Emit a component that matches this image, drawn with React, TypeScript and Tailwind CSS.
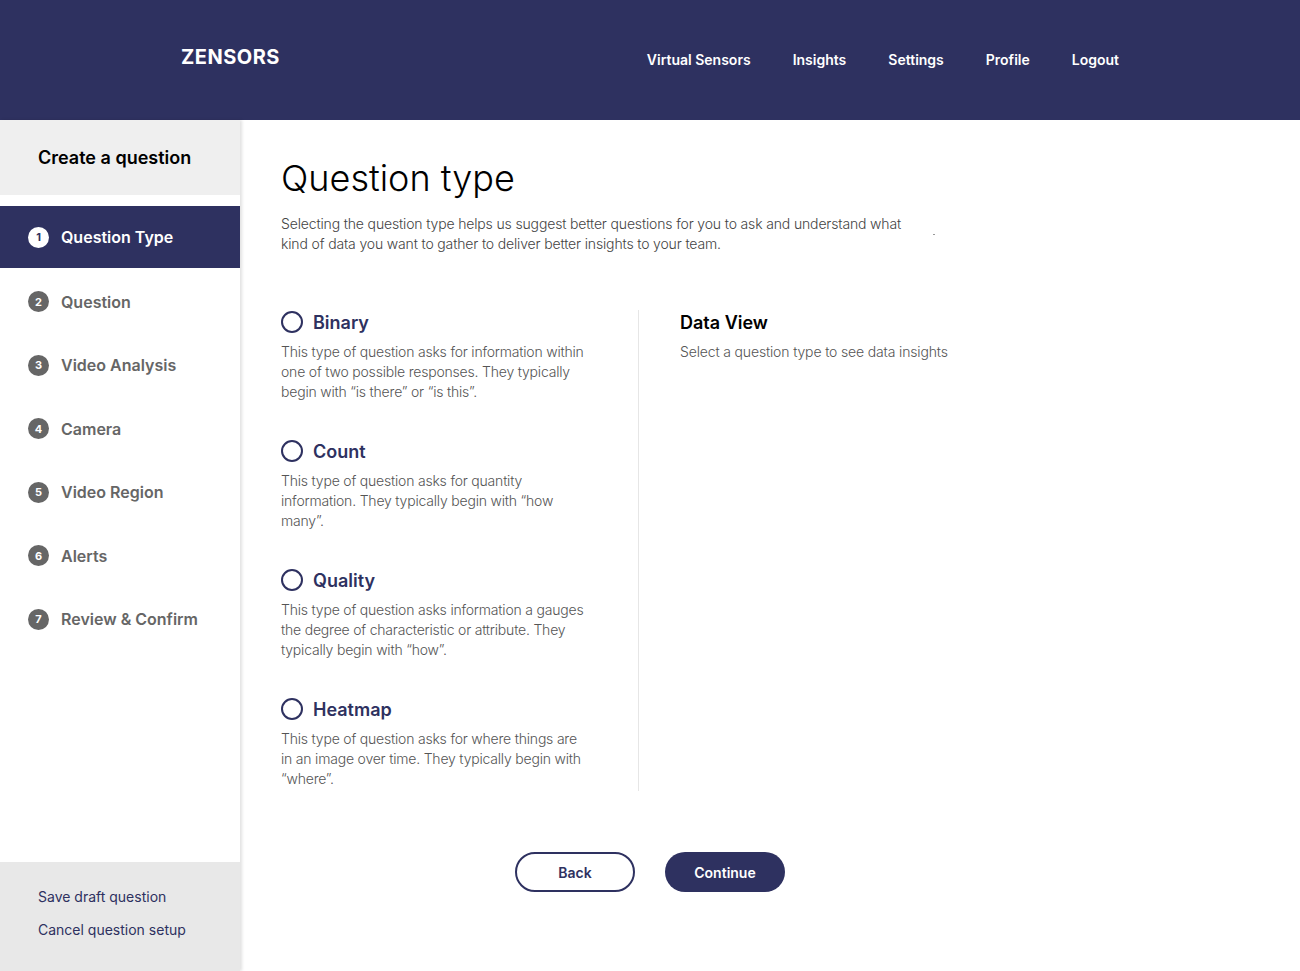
import React from "react";

const NAVY = "#2e3160";

const steps = [
  "Question",
  "Video Analysis",
  "Camera",
  "Video Region",
  "Alerts",
  "Review & Confirm",
];

const options = [
  {
    title: "Binary",
    desc: ["This type of question asks for information within", "one of two possible responses. They typically", "begin with “is there” or “is this”."],
  },
  {
    title: "Count",
    desc: ["This type of question asks for quantity", "information. They typically begin with “how", "many”."],
  },
  {
    title: "Quality",
    desc: ["This type of question asks information a gauges", "the degree of characteristic or attribute. They", "typically begin with “how”."],
  },
  {
    title: "Heatmap",
    desc: ["This type of question asks for where things are", "in an image over time. They typically begin with", "“where”."],
  },
];

export default function App() {
  return (
    <div
      className="w-[1300px] min-h-[971px] bg-white flex flex-col"
      style={{ fontFamily: "Inter, 'Noto Sans', 'Liberation Sans', sans-serif" }}
    >
      {/* Header */}
      <header className="h-[120px] bg-[#2e3160] flex items-center pl-[181px] pr-[181px]">
        <div className="text-white text-[20px] font-bold tracking-[0.5px] -mt-[6px]">ZENSORS</div>
        <nav className="ml-auto flex items-center gap-[42px] text-white text-[14px] font-semibold -mt-[2px]">
          <span>Virtual Sensors</span>
          <span>Insights</span>
          <span>Settings</span>
          <span>Profile</span>
          <span>Logout</span>
        </nav>
      </header>

      <div className="flex flex-1">
        {/* Sidebar */}
        <aside className="w-[240px] min-h-[851px] flex flex-col bg-white shadow-[2px_0_3px_rgba(0,0,0,0.12)] relative z-10">
          <div className="h-[75px] bg-[#efefef] flex items-center pl-[38px] text-[18px] font-semibold text-black">
            Create a question
          </div>
          <div className="mt-[11px] h-[62px] bg-[#2e3160] flex items-center pl-[28px] gap-[12px]">
            <span className="w-[21px] h-[21px] rounded-full bg-white text-[#2e3160] text-[11px] font-bold flex items-center justify-center">
              1
            </span>
            <span className="text-white text-[16px] font-semibold">Question Type</span>
          </div>
          <div className="mt-[2px]" />
          {steps.map((s, i) => (
            <div key={s} className="h-[63.5px] flex items-center pl-[28px] gap-[12px]">
              <span className="w-[21px] h-[21px] rounded-full bg-[#666666] text-white text-[11px] font-bold flex items-center justify-center">
                {i + 2}
              </span>
              <span className="text-[#666666] text-[16px] font-semibold">{s}</span>
            </div>
          ))}
          <div className="flex-1" />
          <div className="h-[109px] bg-[#e8e8e8] pl-[38px] pt-[25px] flex flex-col gap-[13px] text-[14px] text-[#2e3160]">
            <span className="leading-[20px]">Save draft question</span>
            <span className="leading-[20px]">Cancel question setup</span>
          </div>
        </aside>

        {/* Main */}
        <main className="flex-1 pl-[41px] pt-[36px] relative">
          <h1 className="text-[36px] font-light text-black leading-[44px]">Question type</h1>
          <p className="mt-[14px] text-[14px] font-light text-[#444444] leading-[20px] w-[640px] tracking-[-0.15px]">
            Selecting the question type helps us suggest better questions for you to ask and understand what kind of data you want to gather to deliver better insights to your team.
          </p>
          <span className="absolute left-[693px] top-[114px] w-[2px] h-[1px] bg-[#999999]" />

          <div className="mt-[56px] flex">
            <div className="w-[358px] border-r border-[#e6e6e6] flex flex-col gap-[37px] pb-[2px]">
              {options.map((o) => (
                <div key={o.title}>
                  <div className="h-[24px] flex items-center gap-[10px]">
                    <span className="w-[22px] h-[22px] rounded-full border-2 border-[#2e3160]" />
                    <span className="text-[18px] font-semibold text-[#2e3160]">{o.title}</span>
                  </div>
                  <div className="mt-[8px] text-[14px] font-light text-[#555555] leading-[20px] tracking-[-0.2px]">
                    {o.desc.map((l) => (
                      <div key={l}>{l}</div>
                    ))}
                  </div>
                </div>
              ))}
            </div>
            <div className="pl-[41px]">
              <div className="h-[24px] flex items-center text-[18px] font-semibold text-black">Data View</div>
              <div className="mt-[8px] text-[14px] font-light text-[#555555] leading-[20px] tracking-[-0.15px]">
                Select a question type to see data insights
              </div>
            </div>
          </div>

          <div className="mt-[61px] flex gap-[30px] pl-[234px]">
            <button
              className="w-[120px] h-[40px] rounded-full border-2 text-[14px] font-semibold bg-white"
              style={{ borderColor: NAVY, color: NAVY }}
            >
              Back
            </button>
            <button className="w-[120px] h-[40px] rounded-full bg-[#2e3160] text-white text-[14px] font-semibold">
              Continue
            </button>
          </div>
        </main>
      </div>
    </div>
  );
}
